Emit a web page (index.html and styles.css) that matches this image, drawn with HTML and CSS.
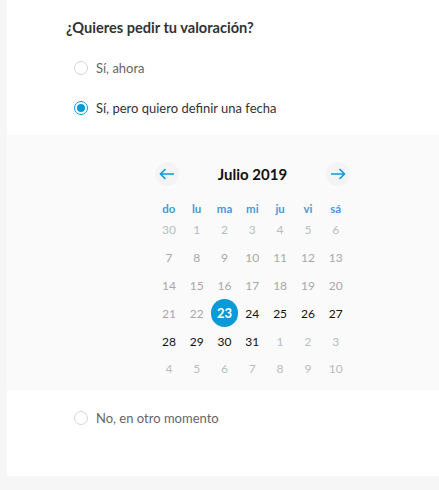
FILE: index.html
```html
<!DOCTYPE html>
<html lang="es">
<head>
    <meta charset="UTF-8">
    <meta name="viewport" content="width=device-width, initial-scale=1.0">
    <title>Valoración</title>
    <link rel="stylesheet" href="styles.css">
</head>
<body>
    <div class="card">
        <div class="top">
            <h1>¿Quieres pedir tu valoración?</h1>
            <label class="option">
                <span class="radio"></span>
                <span>Sí, ahora</span>
            </label>
            <label class="option selected">
                <span class="radio"></span>
                <span>Sí, pero quiero definir una fecha</span>
            </label>
        </div>

        <!-- Calendar -->
        <div class="calendar-section">
            <div class="calendar">
                <div class="cal-header">
                    <button class="nav-btn">
                        <svg width="16" height="12" viewBox="0 0 16 12"><path d="M15 6H1.5M6.5 1L1.5 6l5 5" fill="none" stroke="#0a9ad8" stroke-width="1.6"/></svg>
                    </button>
                    <div class="month">Julio 2019</div>
                    <button class="nav-btn">
                        <svg width="16" height="12" viewBox="0 0 16 12"><path d="M1 6h13.5M9.5 1l5 5-5 5" fill="none" stroke="#0a9ad8" stroke-width="1.6"/></svg>
                    </button>
                </div>
                <div class="weekdays">
                    <span>do</span><span>lu</span><span>ma</span><span>mi</span><span>ju</span><span>vi</span><span>sá</span>
                </div>
                <div class="days">
                    <span class="other">30</span><span class="other">1</span><span class="other">2</span><span class="other">3</span><span class="other">4</span><span class="other">5</span><span class="other">6</span>
                    <span class="past">7</span><span class="past">8</span><span class="past">9</span><span class="past">10</span><span class="past">11</span><span class="past">12</span><span class="past">13</span>
                    <span class="past">14</span><span class="past">15</span><span class="past">16</span><span class="past">17</span><span class="past">18</span><span class="past">19</span><span class="past">20</span>
                    <span class="past">21</span><span class="past">22</span><span class="active"><b>23</b></span><span>24</span><span>25</span><span>26</span><span>27</span>
                    <span>28</span><span>29</span><span>30</span><span>31</span><span class="other">1</span><span class="other">2</span><span class="other">3</span>
                    <span class="other">4</span><span class="other">5</span><span class="other">6</span><span class="other">7</span><span class="other">8</span><span class="other">9</span><span class="other">10</span>
                </div>
            </div>
        </div>

        <div class="bottom">
            <label class="option">
                <span class="radio"></span>
                <span>No, en otro momento</span>
            </label>
        </div>
    </div>
</body>
</html>
```

FILE: styles.css
```css
* {
    margin: 0;
    padding: 0;
    box-sizing: border-box;
    font-family: Lato, "Noto Sans", sans-serif;
}

body {
    background-color: #f6f6f6;
    padding-left: 7px;
    height: 490px;
}

.card {
    background: white;
}

.top {
    padding: 18px 0 7px 59px;
}

.top h1 {
    color: #333;
    font-size: 14.6px;
    font-weight: 700;
    line-height: 20px;
    margin-bottom: 10px;
}

.option {
    display: flex;
    align-items: center;
    height: 40px;
    padding-left: 8px;
    font-size: 13px;
    color: #666;
}

.option.selected {
    color: #333;
}

.radio {
    width: 14px;
    height: 14px;
    border: 1px solid #d6d6d6;
    border-radius: 50%;
    margin-right: 8px;
    display: flex;
    align-items: center;
    justify-content: center;
}

.option.selected .radio {
    border-color: #0a9ad8;
}

.option.selected .radio::after {
    content: "";
    width: 8px;
    height: 8px;
    border-radius: 50%;
    background: #0a9ad8;
}

.calendar-section {
    background: #fafafa;
    padding: 25px 0 7px 59px;
    display: flex;
    justify-content: center;
}

.calendar {
    width: 195px;
}

.cal-header {
    display: flex;
    align-items: center;
    justify-content: space-between;
    height: 28px;
}

.nav-btn {
    width: 24px;
    height: 24px;
    border: none;
    border-radius: 50%;
    background: #f4f4f4;
    display: flex;
    align-items: center;
    justify-content: center;
    cursor: pointer;
}

.month {
    font-size: 15px;
    font-weight: 700;
    color: #111;
}

.weekdays,
.days {
    display: grid;
    grid-template-columns: repeat(7, 27.8px);
}

.weekdays {
    margin-top: 12px;
    height: 16px;
    align-items: center;
}

.weekdays span {
    text-align: center;
    font-size: 11.5px;
    font-weight: 700;
    color: #4a98d4;
}

.days {
    grid-auto-rows: 27.8px;
}

.days span {
    display: flex;
    align-items: center;
    justify-content: center;
    font-size: 12px;
    color: #111;
}

.days .past {
    color: #a8a8a8;
}

.days .other {
    color: #b5bec4;
}

.days .active b {
    width: 28px;
    height: 28px;
    border-radius: 50%;
    background: #0a9ad8;
    color: white;
    font-weight: 700;
    font-size: 13px;
    display: flex;
    align-items: center;
    justify-content: center;
}

.bottom {
    padding: 8px 0 38px 59px;
}
```
